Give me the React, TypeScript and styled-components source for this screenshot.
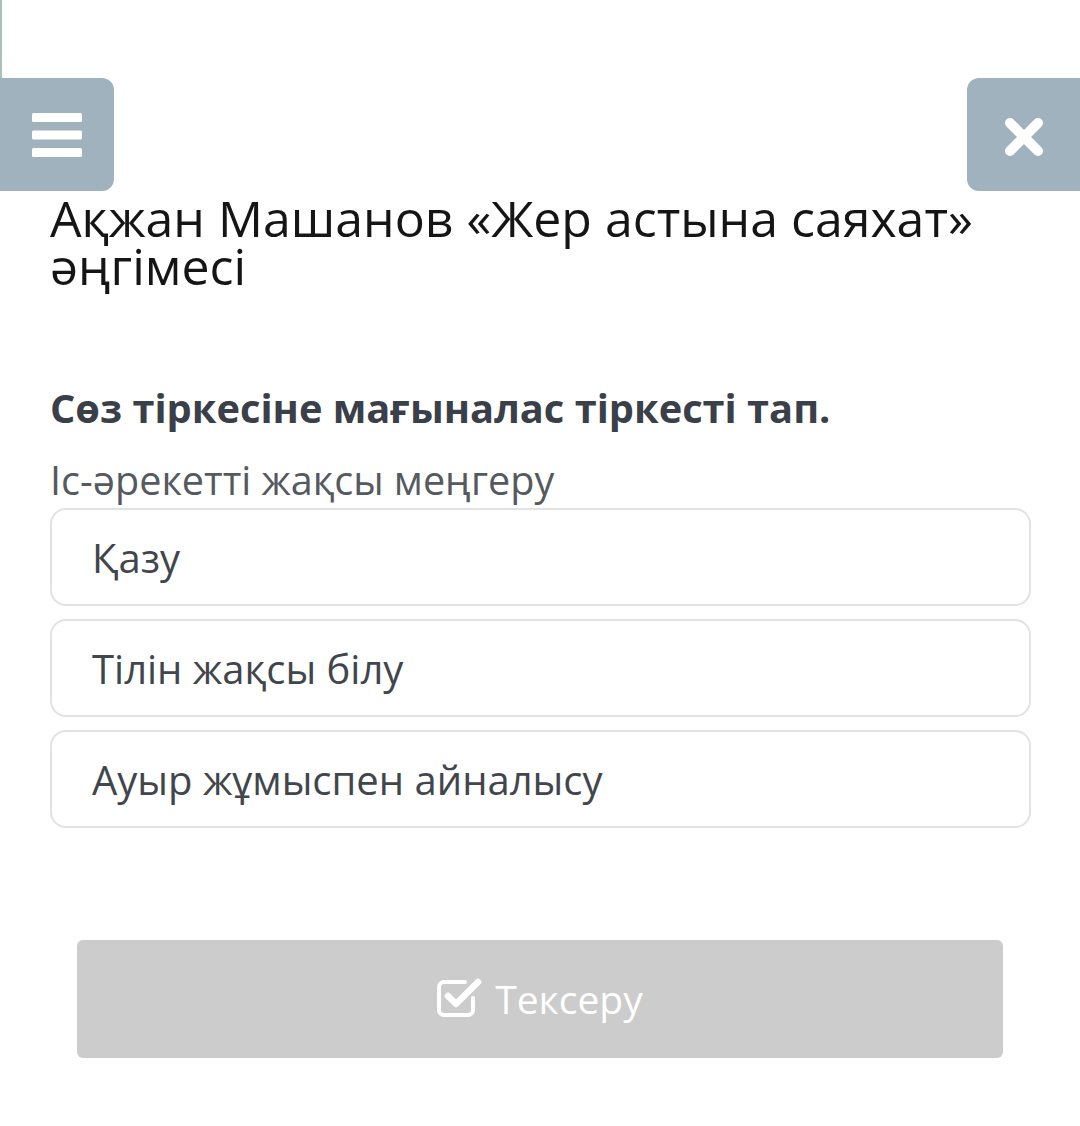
import { createGlobalStyle, styled } from 'styled-components';

const GlobalStyle = createGlobalStyle`
  body {
    margin: 0;
    background: #ffffff;
    font-family: "Open Sans", "Noto Sans", sans-serif;
  }
`;

const options = ['Қазу', 'Тілін жақсы білу', 'Ауыр жұмыспен айналысу'];

const MenuIcon = () => (
  <svg width="50" height="44" viewBox="0 0 50 44" fill="#ffffff">
    <rect x="0" y="0" width="50" height="9" rx="1.5" />
    <rect x="0" y="17.5" width="50" height="9" rx="1.5" />
    <rect x="0" y="35" width="50" height="9" rx="1.5" />
  </svg>
);

const CloseIcon = () => (
  <svg width="44" height="44" viewBox="0 0 44 44">
    <path
      d="M8 8 L36 36 M36 8 L8 36"
      stroke="#ffffff"
      strokeWidth="10"
      strokeLinecap="round"
    />
  </svg>
);

const CheckIcon = () => (
  <svg width="46" height="40" viewBox="0 0 46 40" fill="none">
    <path
      d="M36 21 V33 a5 5 0 0 1 -5 5 H7 a5 5 0 0 1 -5 -5 V10 a5 5 0 0 1 5 -5 H28"
      stroke="#ffffff"
      strokeWidth="4"
      strokeLinecap="round"
    />
    <path
      d="M11 19 L19 27 L41 5"
      stroke="#ffffff"
      strokeWidth="6.5"
      strokeLinecap="round"
      strokeLinejoin="round"
    />
  </svg>
);

const App = () => (
  <>
    <GlobalStyle />
    <Page>
      <TopBar>
        <BarButton $side="left">
          <MenuIcon />
        </BarButton>
        <BarButton $side="right">
          <CloseIcon />
        </BarButton>
      </TopBar>
      <Content>
        <Title>Ақжан Машанов «Жер астына саяхат» әңгімесі</Title>
        <Question>Сөз тіркесіне мағыналас тіркесті тап.</Question>
        <Prompt>Іс-әрекетті жақсы меңгеру</Prompt>
        <OptionList>
          {options.map((option) => (
            <Option key={option}>{option}</Option>
          ))}
        </OptionList>
        <CheckButton type="button">
          <CheckIcon />
          <span>Тексеру</span>
        </CheckButton>
      </Content>
    </Page>
  </>
);

const Page = styled.div`
  position: relative;
  padding-top: 78px;
  padding-bottom: 68px;

  &::before {
    content: '';
    position: absolute;
    left: 0;
    top: 0;
    width: 2px;
    height: 126px;
    background: #a9c2b8;
  }
`;

const TopBar = styled.div`
  display: flex;
  justify-content: space-between;
  height: 113px;
`;

const BarButton = styled.div<{ $side: 'left' | 'right' }>`
  position: relative;
  width: ${({ $side }) => ($side === 'left' ? '114px' : '113px')};
  height: 113px;
  display: flex;
  align-items: center;
  justify-content: center;
  background: #9fb2be;
  border-radius: ${({ $side }) =>
    $side === 'left' ? '0 12px 12px 0' : '12px 0 0 12px'};

  & > svg {
    margin-top: ${({ $side }) => ($side === 'left' ? '0' : '5px')};
  }
`;

const Content = styled.div`
  padding: 0 49px 0 50px;
`;

const Title = styled.h1`
  margin: 3px 0 0;
  font-size: 50px;
  line-height: 48px;
  font-weight: 400;
  color: #151515;
`;

const Question = styled.h2`
  margin: 94px 0 0;
  font-size: 39.8px;
  line-height: 48px;
  font-weight: 700;
  color: #3a4049;
`;

const Prompt = styled.p`
  margin: 24px 0 0;
  font-size: 39.6px;
  line-height: 48px;
  font-weight: 400;
  color: #555a60;
`;

const OptionList = styled.div`
  display: flex;
  flex-direction: column;
  gap: 13px;
  margin-top: 4px;
`;

const Option = styled.div`
  height: 98px;
  box-sizing: border-box;
  display: flex;
  align-items: center;
  padding-left: 40px;
  border: 2px solid #e2e2e2;
  border-radius: 16px;
  font-size: 40px;
  color: #41464c;
`;

const CheckButton = styled.button`
  margin: 112px 28px 0 27px;
  width: calc(100% - 55px);
  height: 118px;
  display: flex;
  align-items: center;
  justify-content: center;
  gap: 12px;
  border: none;
  border-radius: 6px;
  background: #cccccc;
  color: #ffffff;
  font-family: "Open Sans", "Noto Sans", sans-serif;
  font-size: 39px;
  cursor: default;

  & > svg {
    margin-top: -4px;
  }

  & > span {
    margin-top: -2px;
  }
`;

export default App;
